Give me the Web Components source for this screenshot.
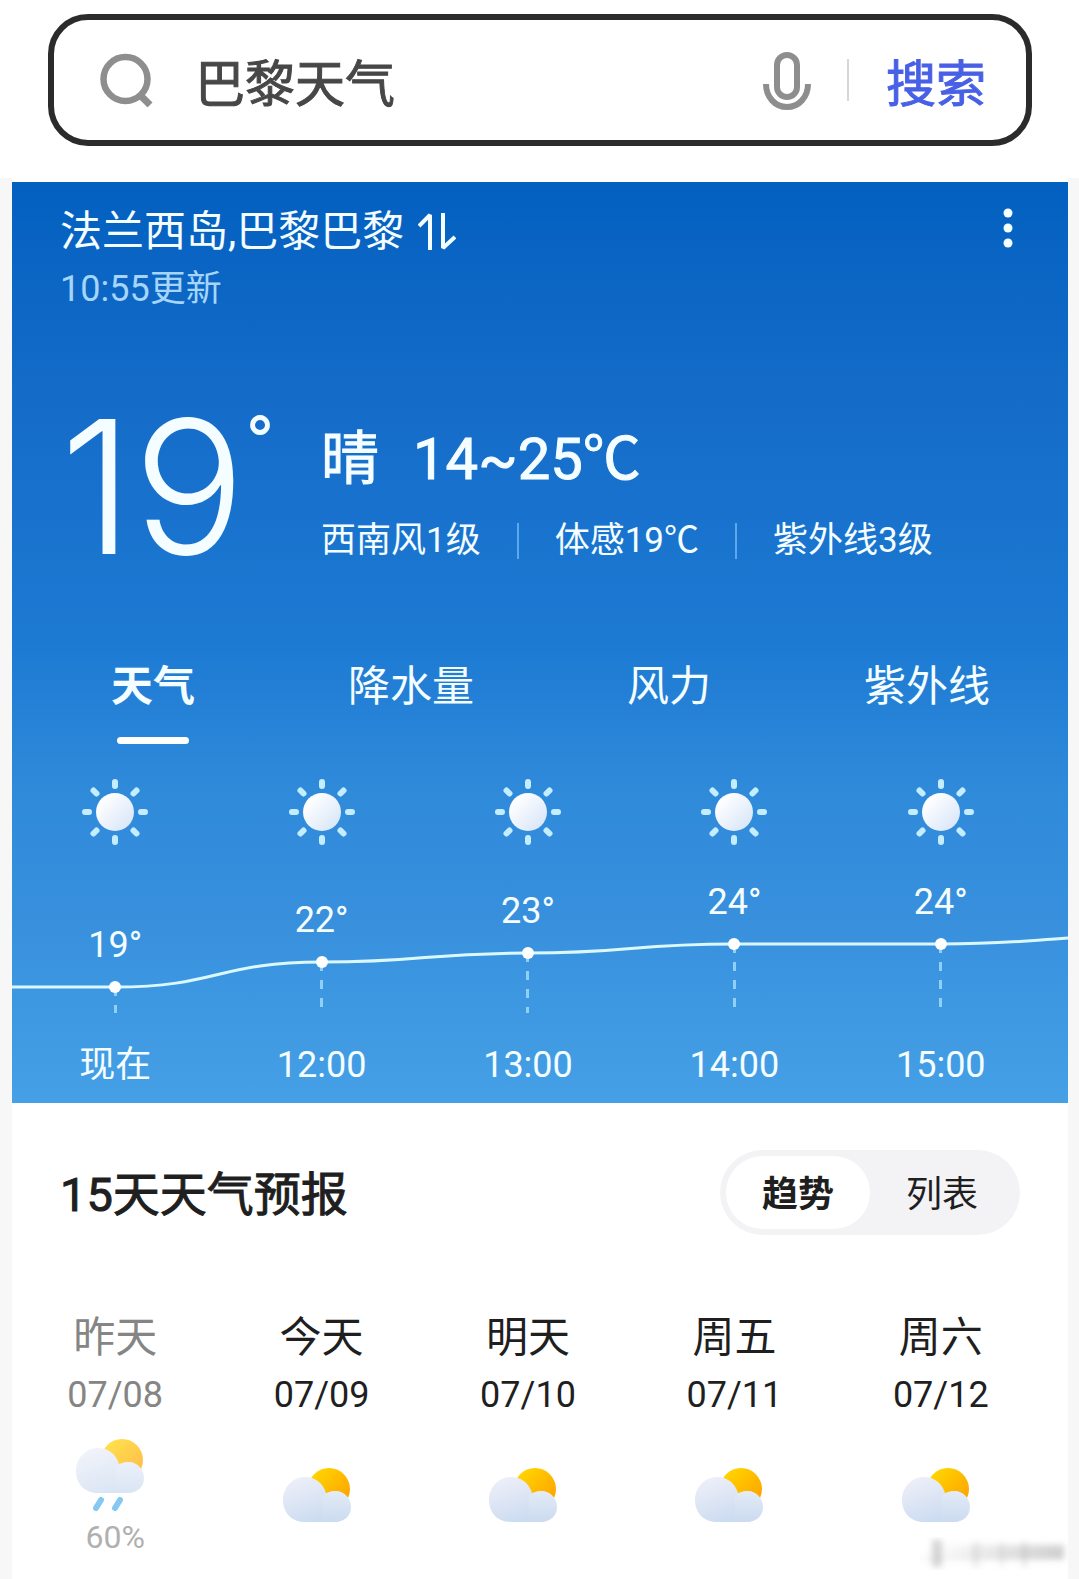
<!DOCTYPE html>
<html lang="zh-CN">
<head>
<meta charset="utf-8">
<meta name="viewport" content="width=device-width, initial-scale=1">
<title>巴黎天气</title>
<style>
    body{
        margin: 0;
        background: #f7f7f8;
        color: #1f1f1f;
        font-family: Roboto, "Noto Sans CJK SC", sans-serif;
    }

    main{
        position: relative;
        margin: 0 11px 0 12px;
        padding-top: 4px;
        background: #fff;
    }
</style>
</head>
<body>

<search-bar value="巴黎天气"></search-bar>

<main>
    <weather-card>
        <weather-place slot="place" time="10:55更新">法兰西岛,巴黎巴黎</weather-place>
        <weather-now slot="now" temp="19" sky="晴" range="14~25℃">
            <span>西南风1级</span>
            <span>体感19℃</span>
            <span>紫外线3级</span>
        </weather-now>
        <weather-tabs slot="tabs" items="天气,降水量,风力,紫外线"></weather-tabs>
        <hourly-trend slot="hours">
            <hour-column temp="19" y="141">现在</hour-column>
            <hour-column temp="22" y="116">12:00</hour-column>
            <hour-column temp="23" y="107">13:00</hour-column>
            <hour-column temp="24" y="98">14:00</hour-column>
            <hour-column temp="24" y="98">15:00</hour-column>
        </hourly-trend>
    </weather-card>

    <day-forecast heading="15天天气预报">
        <view-switch slot="switch" items="趋势,列表"></view-switch>
        <day-column date="07/08" rain="60%" past>昨天</day-column>
        <day-column date="07/09">今天</day-column>
        <day-column date="07/10">明天</day-column>
        <day-column date="07/11">周五</day-column>
        <day-column date="07/12">周六</day-column>
    </day-forecast>
    <corner-mark></corner-mark>
</main>

<script>
// Small helper: parse the markup once, clone it for every instance
function makeTemplate(html){
    const template = document.createElement('template');
    template.innerHTML = html;
    return template;
}

class BaseElement extends HTMLElement{
    constructor() {
        super();
        this.attachShadow({ mode: 'open' });
        this.shadowRoot.appendChild(this.constructor.template.content.cloneNode(true));
    }

    find(selector) {
        return this.shadowRoot.querySelector(selector);
    }
}

// Search box

class SearchBar extends BaseElement{
    static template = makeTemplate(`
        <style>
            :host{
                display: block;
                padding: 14px 47px 32px 48px;
                background: #fff;
            }

            form{
                display: flex;
                align-items: center;
                box-sizing: border-box;
                height: 132px;
                padding: 0 40px 0 45px;
                border: 6px solid #2b2b2b;
                border-radius: 40px;
            }

            svg{
                display: block;
                flex: none;
            }

            input{
                flex: 1;
                min-width: 0;
                height: 72px;
                margin: 0 20px 0 42px;
                padding: 10px 0 0;
                border: 0;
                outline: 0;
                background: none;
                color: #474747;
                font: 400 50px/72px Roboto, "Noto Sans CJK SC", sans-serif;
                -webkit-text-stroke: 1px;
            }

            button{
                padding: 0;
                border: 0;
                background: none;
                color: #4860e6;
                font: 400 50px/72px Roboto, "Noto Sans CJK SC", sans-serif;
            }

            button[type=submit]{
                padding-top: 10px;
                -webkit-text-stroke: 1px;
            }

            i{
                width: 2px;
                height: 42px;
                margin: 0 37px 0 35px;
                background: #d6d6d6;
            }
        </style>
        <form>
            <svg width="54" height="54" viewBox="0 0 54 54" fill="none" stroke="#8e8e8e">
                <circle cx="26.500" cy="26" r="22" stroke-width="6.500"/>
                <path d="M40 41l11 11" stroke-width="7"/>
            </svg>
            <input type="text" aria-label="搜索">
            <button type="button" aria-label="语音">
                <svg width="50" height="60" viewBox="0 0 50 60" fill="none" stroke="#8e8e8e" stroke-width="6">
                    <rect x="15" y="5" width="20" height="42" rx="10"/>
                    <path d="M4 34c0 13 9 23 21 23s21-10 21-23"/>
                </svg>
            </button>
            <i></i>
            <button type="submit">搜索</button>
        </form>
    `);

    connectedCallback() {
        this.find('input').value = this.getAttribute('value');
    }
}

// Blue panel with the current weather

class WeatherCard extends BaseElement{
    static template = makeTemplate(`
        <style>
            :host{
                display: block;
                padding: 26px 0 17px;
                color: #f4fdff;
                background: linear-gradient(#0360c0 0%, #146bc8 22%, #1d7ad3 50%, #2f8ada 66%, #3890dd 80%, #45a0e6 100%);
            }
        </style>
        <slot name="place"></slot>
        <slot name="now"></slot>
        <slot name="tabs"></slot>
        <slot name="hours"></slot>
    `);
}

class WeatherPlace extends BaseElement{
    static template = makeTemplate(`
        <style>
            :host{
                display: flex;
                justify-content: space-between;
                align-items: flex-start;
                padding: 0 48px;
            }

            h1{
                display: flex;
                align-items: center;
                gap: 14px;
                margin: 0;
                font-size: 42px;
                font-weight: 400;
                line-height: 48px;
            }

            p{
                margin: 12px 0 0;
                color: #a5d5fa;
                font-size: 36px;
                line-height: 42px;
            }

            button{
                padding: 0 6px;
                border: 0;
                background: none;
                color: inherit;
            }

            svg{
                display: block;
            }
        </style>
        <div>
            <h1>
                <slot></slot>
                <svg width="38" height="40" viewBox="0 0 38 40" fill="none" stroke="currentColor" stroke-width="4" stroke-linejoin="bevel">
                    <path d="M1 14L12 3V38M25 1V36L37 25"/>
                </svg>
            </h1>
            <p></p>
        </div>
        <button type="button" aria-label="更多">
            <svg width="12" height="40" viewBox="0 0 12 40" fill="currentColor">
                <circle cx="6" cy="5" r="4.500"/>
                <circle cx="6" cy="20" r="4.500"/>
                <circle cx="6" cy="35" r="4.500"/>
            </svg>
        </button>
    `);

    connectedCallback() {
        this.find('p').textContent = this.getAttribute('time');
    }
}

class WeatherNow extends BaseElement{
    static template = makeTemplate(`
        <style>
            :host{
                display: flex;
                align-items: flex-end;
                margin-top: 105px;
                padding: 0 48px;
            }

            .temp{
                display: flex;
                width: 261px;
                font: 300 186px/144px Inter, Roboto, sans-serif;
            }

            sup{
                font: 400 80px/60px Roboto, sans-serif;
            }

            .sky{
                display: flex;
                gap: 34px;
                font-size: 58px;
                line-height: 64px;
                -webkit-text-stroke: 1px;
            }

            .facts{
                display: flex;
                margin-top: 32px;
                font-size: 35px;
                line-height: 36px;
            }

            ::slotted(span:not(:first-child)){
                margin-left: 36px;
                padding-left: 36px;
                border-left: 2px solid #5ba9ec;
            }
        </style>
        <div class="temp"><span></span><sup>°</sup></div>
        <div>
            <div class="sky"><span></span><span></span></div>
            <div class="facts"><slot></slot></div>
        </div>
    `);

    connectedCallback() {
        this.find('.temp span').textContent = this.getAttribute('temp');
        this.find('.sky span').textContent = this.getAttribute('sky');
        this.find('.sky span:last-child').textContent = this.getAttribute('range');
    }
}

class WeatherTabs extends BaseElement{
    static template = makeTemplate(`
        <style>
            :host{
                display: grid;
                grid-auto-columns: 1fr;
                grid-auto-flow: column;
                margin-top: 104px;
                padding: 0 12px;
            }

            button{
                display: flex;
                flex-direction: column;
                align-items: center;
                gap: 26px;
                padding: 0;
                border: 0;
                background: none;
                color: inherit;
                font: 400 42px/48px Roboto, "Noto Sans CJK SC", sans-serif;
            }

            button::after{
                content: "";
                width: 72px;
                height: 7px;
                border-radius: 4px;
            }

            button[aria-pressed=true]{
                font-weight: 700;
            }

            button[aria-pressed=true]::after{
                background: #fff;
            }
        </style>
    `);

    connectedCallback() {
        this.getAttribute('items').split(',').forEach((name, i) => {
            const button = document.createElement('button');
            button.type = 'button';
            button.textContent = name;
            button.setAttribute('aria-pressed', i === 0);
            this.shadowRoot.appendChild(button);
        });
    }
}

// Hour by hour: the columns lie over the curve, both in one grid cell

class HourlyTrend extends BaseElement{
    static template = makeTemplate(`
        <style>
            :host{
                display: grid;
                margin-top: 34px;
            }

            svg, div{
                grid-area: 1 / 1;
            }

            svg{
                width: 100%;
                height: 197px;
                margin-top: 68px;
            }

            div{
                display: grid;
                grid-template-columns: repeat(5, 1fr);
                padding-right: 24px;
            }
        </style>
        <svg viewBox="0 0 1056 197" preserveAspectRatio="none" fill="none" stroke="#dcf8ff" stroke-width="3">
            <path vector-effect="non-scaling-stroke" d="M0 141H103C206 141 206 116 310 116C413 116 413 107 516 107C619 107 619 98 722 98H929C990 98 1010 95 1056 92"/>
        </svg>
        <div><slot></slot></div>
    `);
}

class HourColumn extends BaseElement{
    static template = makeTemplate(`
        <style>
            :host{
                display: flex;
                flex-direction: column;
                align-items: center;
                font-size: 36px;
                line-height: 36px;
            }

            .plot{
                display: flex;
                flex-direction: column;
                align-items: center;
                box-sizing: border-box;
                height: 167px;
                margin-bottom: 31px;
                padding-top: calc(var(--y) - 60px);
            }

            .dot{
                z-index: 1;
                width: 12px;
                height: 12px;
                margin-top: 18px;
                border-radius: 50%;
                background: #fff;
            }

            .stem{
                flex: 1;
                width: 3px;
                margin-top: -6px;
                background: repeating-linear-gradient(#8fd0f8 0 9px, transparent 9px 18px);
            }

            .label{
                line-height: 42px;
            }
        </style>
        <svg width="68" height="68" viewBox="-34 -34 68 68">
            <defs>
                <linearGradient id="disc" x1="0" y1="0" x2="1" y2="1">
                    <stop offset=".2" stop-color="#fdfeff"/>
                    <stop offset="1" stop-color="#d3e2f7"/>
                </linearGradient>
            </defs>
            <circle r="19" fill="url(#disc)"/>
            <path stroke="#c4eeff" stroke-width="6" stroke-linecap="round" d="M0-30V-26M0 30V26M-30 0H-26M30 0H26M-21.500-21.500l3 3M21.500-21.500l-3 3M-21.500 21.500l3-3M21.500 21.500l-3-3"/>
        </svg>
        <div class="plot">
            <span></span>
            <div class="dot"></div>
            <div class="stem"></div>
        </div>
        <div class="label"><slot></slot></div>
    `);

    connectedCallback() {
        this.find('.plot').style.setProperty('--y', this.getAttribute('y') + 'px');
        this.find('.plot span').textContent = this.getAttribute('temp') + '°';
    }
}

// 15 day forecast

class DayForecast extends BaseElement{
    static template = makeTemplate(`
        <style>
            :host{
                display: block;
                padding: 47px 0 27px;
            }

            header{
                display: flex;
                justify-content: space-between;
                align-items: center;
                padding: 0 48px;
            }

            h2{
                margin: 0;
                padding-top: 4px;
                font-size: 47px;
                font-weight: 400;
                line-height: 60px;
                -webkit-text-stroke: 1px;
            }

            .days{
                display: grid;
                grid-template-columns: repeat(5, 1fr);
                margin-top: 79px;
                padding-right: 24px;
            }
        </style>
        <header>
            <h2></h2>
            <slot name="switch"></slot>
        </header>
        <div class="days"><slot></slot></div>
    `);

    connectedCallback() {
        this.find('h2').textContent = this.getAttribute('heading');
    }
}

class ViewSwitch extends BaseElement{
    static template = makeTemplate(`
        <style>
            :host{
                display: flex;
                padding: 6px;
                border-radius: 43px;
                background: #f3f3f6;
            }

            button{
                width: 144px;
                height: 73px;
                padding: 4px 0 0;
                border: 0;
                border-radius: 37px;
                background: none;
                color: #1f1f1f;
                font: 400 36px/42px Roboto, "Noto Sans CJK SC", sans-serif;
            }

            button[aria-pressed=true]{
                background: #fff;
                font-weight: 700;
            }
        </style>
    `);

    connectedCallback() {
        this.getAttribute('items').split(',').forEach((name, i) => {
            const button = document.createElement('button');
            button.type = 'button';
            button.textContent = name;
            button.setAttribute('aria-pressed', i === 0);
            this.shadowRoot.appendChild(button);
        });
    }
}

class DayColumn extends BaseElement{
    static template = makeTemplate(`
        <style>
            :host{
                display: flex;
                flex-direction: column;
                align-items: center;
                color: #1f1f1f;
            }

            :host([past]){
                color: #858585;
            }

            .name{
                font-size: 42px;
                line-height: 48px;
            }

            .date{
                margin-top: 12px;
                font-size: 36px;
                line-height: 42px;
            }

            .sky{
                display: flex;
                flex-direction: column;
                align-items: center;
                justify-content: center;
                gap: 10px;
                height: 114px;
                margin-top: 22px;
            }

            .rain{
                color: #b0b0b0;
                font-size: 32px;
                line-height: 30px;
            }

            :host([past]) svg{
                opacity: .7;
            }

            :host(:not([rain])) .rain, :host(:not([rain])) .drops{
                display: none;
            }
        </style>
        <div class="name"><slot></slot></div>
        <div class="date"></div>
        <div class="sky">
            <svg width="80" height="56" viewBox="0 0 80 56">
                <defs>
                    <linearGradient id="sun" x1="0" y1="0" x2="1" y2="1">
                        <stop offset="0" stop-color="#ffdd00"/>
                        <stop offset="1" stop-color="#ff9a00"/>
                    </linearGradient>
                    <linearGradient id="cloud" x1="0" y1="0" x2=".5" y2="1">
                        <stop offset="0" stop-color="#f1f1fa"/>
                        <stop offset="1" stop-color="#cbdbf0"/>
                    </linearGradient>
                    <linearGradient id="puff" x1="0" y1="0" x2="0" y2="1">
                        <stop offset="0" stop-color="#e3ebf7"/>
                        <stop offset="1" stop-color="#cbdbf0"/>
                    </linearGradient>
                </defs>
                <circle cx="47" cy="22" r="21" fill="url(#sun)"/>
                <path fill="url(#cloud)" d="M23 55C9 55 1 45 1 33C1 20 11 10 23 10C33 10 41 16 44 26L54 24C63 25 68 31 68 39C68 48 62 55 52 55Z"/>
                <path fill="url(#puff)" d="M52 55C62 55 69 49 69 40C69 31 62 24 53 24C48 24 44 26 41 29L40 55Z"/>
                <path class="drops" stroke="#53b1ec" stroke-width="6" stroke-linecap="round" d="M26 62l-5 8M45 62l-5 8"/>
            </svg>
            <div class="rain"></div>
        </div>
    `);

    connectedCallback() {
        this.find('.date').textContent = this.getAttribute('date');
        if (this.hasAttribute('rain')) {
            // the rain icon is taller, to hold the drops
            this.find('svg').setAttribute('height', 74);
            this.find('svg').setAttribute('viewBox', '0 0 80 74');
            this.find('.rain').textContent = this.getAttribute('rain');
        }
    }
}

// Faded smear over the lower right corner

class CornerMark extends BaseElement{
    static template = makeTemplate(`
        <style>
            :host{
                position: absolute;
                right: 0;
                bottom: 8px;
            }

            svg{
                display: block;
            }
        </style>
        <svg width="148" height="36" viewBox="0 0 148 36">
            <defs>
                <filter id="soft"><feGaussianBlur stdDeviation="3"/></filter>
                <linearGradient id="fade">
                    <stop offset="0" stop-color="#888" stop-opacity="0"/>
                    <stop offset="1" stop-color="#888" stop-opacity=".4"/>
                </linearGradient>
            </defs>
            <g filter="url(#soft)" fill="#777">
                <rect x="12" y="5" width="10" height="27" opacity=".3"/>
                <rect x="52" y="7" width="8" height="25" opacity=".12"/>
                <rect x="80" y="7" width="4" height="25" opacity=".14"/>
                <rect x="102" y="7" width="5" height="25" opacity=".16"/>
                <rect x="10" y="10" width="134" height="14" fill="url(#fade)"/>
                <rect x="2" y="21" width="140" height="4" opacity=".08"/>
            </g>
        </svg>
    `);
}

window.customElements.define('search-bar', SearchBar);
window.customElements.define('weather-card', WeatherCard);
window.customElements.define('weather-place', WeatherPlace);
window.customElements.define('weather-now', WeatherNow);
window.customElements.define('weather-tabs', WeatherTabs);
window.customElements.define('hourly-trend', HourlyTrend);
window.customElements.define('hour-column', HourColumn);
window.customElements.define('day-forecast', DayForecast);
window.customElements.define('view-switch', ViewSwitch);
window.customElements.define('day-column', DayColumn);
window.customElements.define('corner-mark', CornerMark);
</script>
</body>
</html>
